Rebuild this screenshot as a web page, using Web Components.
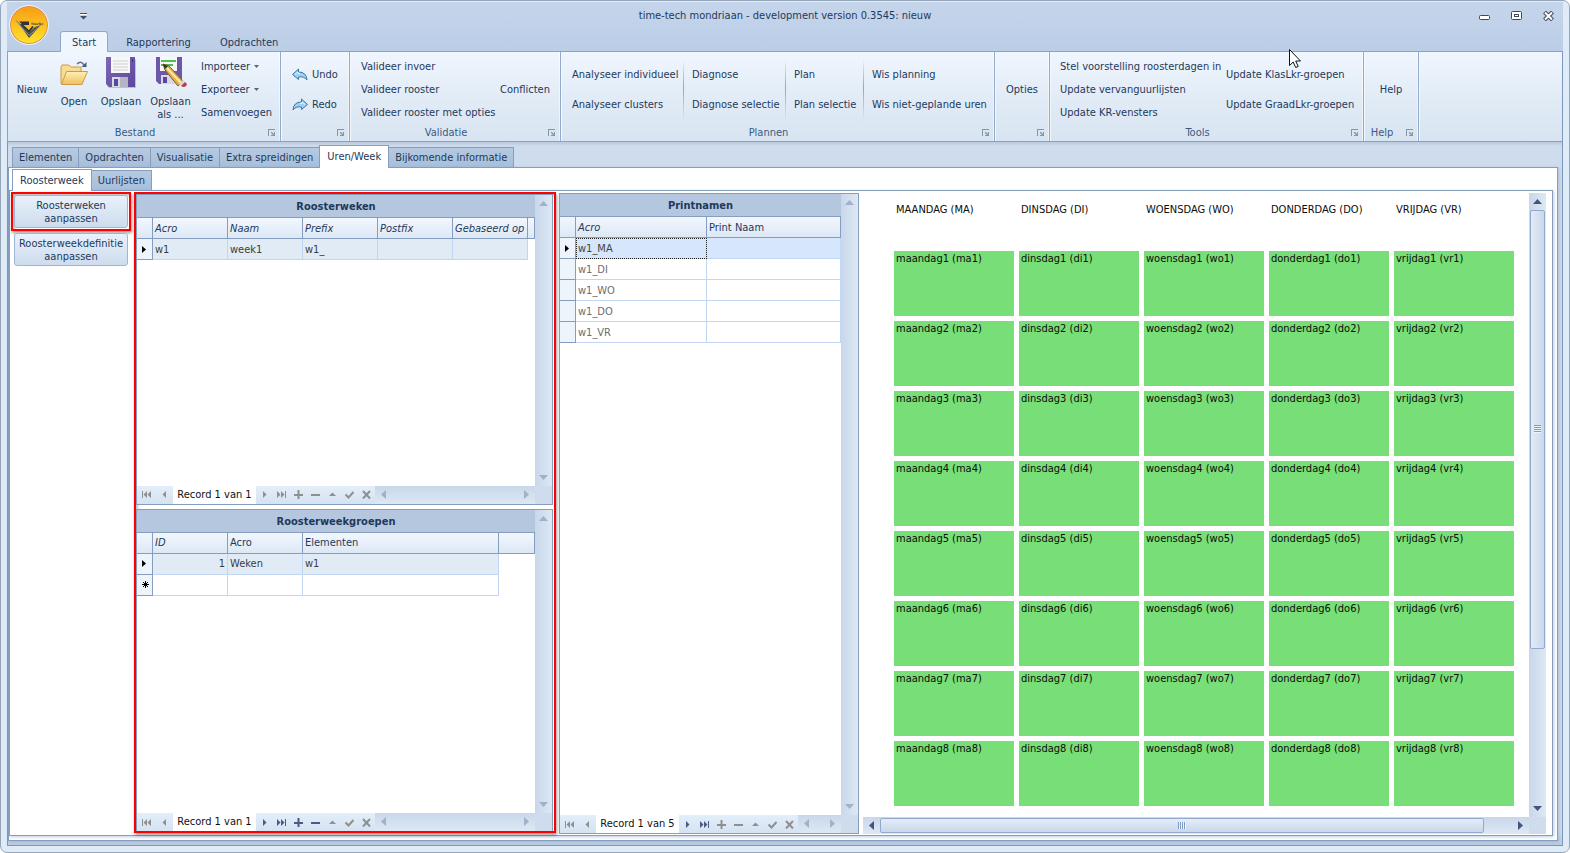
<!DOCTYPE html>
<html lang="nl">
<head>
<meta charset="utf-8">
<title>time-tech mondriaan</title>
<style>
  :root {
    --ink: #1e395b;
    --line: #859ebf;
    --cell-line: #c0d6f2;
    --frame: #dfebf7;
    --strip: #cfdced;
    --tab: linear-gradient(#b6cae1, #a7bfdb);
    --head: linear-gradient(#f2f7fe, #dde8f5);
    --mark: #ff0000;
  }
  body {
    margin: 0;
    background: #fff;
    color: var(--ink);
    font: 11px/13px "DejaVu Sans Condensed", "DejaVu Sans", Tahoma, sans-serif;
  }
</style>
</head>
<body>

<app-window>
  <title-bar slot="title" caption="time-tech mondriaan - development version 0.3545: nieuw"></title-bar>

  <ribbon-bar slot="ribbon">
    <ribbon-group caption="Bestand" style="--group: 273px">
      <ribbon-column style="--width: 40px; --indent: 4px" center><ribbon-button>Nieuw</ribbon-button></ribbon-column>
      <ribbon-button large icon="open" style="--width: 44px">Open</ribbon-button>
      <ribbon-button large icon="save" style="--width: 50px">Opslaan</ribbon-button>
      <ribbon-button large icon="saveas" style="--width: 49px">Opslaan als ...</ribbon-button>
      <ribbon-column style="--indent: 6px">
        <ribbon-button menu>Importeer</ribbon-button>
        <ribbon-button menu>Exporteer</ribbon-button>
        <ribbon-button>Samenvoegen</ribbon-button>
      </ribbon-column>
    </ribbon-group>
    <ribbon-group style="--group: 69px">
      <ribbon-column two style="--indent: 11px">
        <ribbon-button icon="undo">Undo</ribbon-button>
        <ribbon-button icon="redo">Redo</ribbon-button>
      </ribbon-column>
    </ribbon-group>
    <ribbon-group caption="Validatie" style="--group: 211px">
      <ribbon-column style="--width: 139px; --indent: 11px">
        <ribbon-button>Valideer invoer</ribbon-button>
        <ribbon-button>Valideer rooster</ribbon-button>
        <ribbon-button>Valideer rooster met opties</ribbon-button>
      </ribbon-column>
      <ribbon-column><ribbon-button>Conflicten</ribbon-button></ribbon-column>
    </ribbon-group>
    <ribbon-group caption="Plannen" style="--group: 434px">
      <ribbon-column two style="--width: 111px; --indent: 11px">
        <ribbon-button>Analyseer individueel</ribbon-button>
        <ribbon-button>Analyseer clusters</ribbon-button>
      </ribbon-column>
      <ribbon-column two rule style="--width: 94px; --indent: 8px">
        <ribbon-button>Diagnose</ribbon-button>
        <ribbon-button>Diagnose selectie</ribbon-button>
      </ribbon-column>
      <ribbon-column two rule style="--width: 70px; --indent: 8px">
        <ribbon-button>Plan</ribbon-button>
        <ribbon-button>Plan selectie</ribbon-button>
      </ribbon-column>
      <ribbon-column two rule style="--indent: 8px">
        <ribbon-button>Wis planning</ribbon-button>
        <ribbon-button>Wis niet-geplande uren</ribbon-button>
      </ribbon-column>
    </ribbon-group>
    <ribbon-group style="--group: 55px" middle>
      <ribbon-column><ribbon-button>Opties</ribbon-button></ribbon-column>
    </ribbon-group>
    <ribbon-group caption="Tools" style="--group: 314px">
      <ribbon-column style="--width: 166px; --indent: 10px">
        <ribbon-button>Stel voorstelling roosterdagen in</ribbon-button>
        <ribbon-button>Update vervanguurlijsten</ribbon-button>
        <ribbon-button>Update KR-vensters</ribbon-button>
      </ribbon-column>
      <ribbon-column two>
        <ribbon-button>Update KlasLkr-groepen</ribbon-button>
        <ribbon-button>Update GraadLkr-groepen</ribbon-button>
      </ribbon-column>
    </ribbon-group>
    <ribbon-group caption="Help" style="--group: 55px" middle>
      <ribbon-column><ribbon-button>Help</ribbon-button></ribbon-column>
    </ribbon-group>
  </ribbon-bar>

  <tab-page tabs="Elementen,Opdrachten,Visualisatie,Extra spreidingen,Uren/Week,Bijkomende informatie" active="4">
    <tab-page inner tabs="Roosterweek,Uurlijsten" active="0">
      <roster-view></roster-view>
    </tab-page>
  </tab-page>
</app-window>

<script>
const ICONS = {
  open: `<svg width="30" height="32" viewBox="0 0 30 32">
    <defs><linearGradient id="f" x2="0" y2="1"><stop stop-color="#fff0b8"/><stop offset="1" stop-color="#eebf5b"/></linearGradient></defs>
    <path d="M2 27V10l1-2h7l2 2h10v4" fill="#f6dc94" stroke="#cd9b45"/>
    <path d="M2.500 27.500L7.500 14.500H28.500L23 27.500Z" fill="url(#f)" stroke="#cd9b45" stroke-linejoin="round"/>
    <path d="M18 7q4-4 7 1" fill="none" stroke="#5b7594" stroke-width="1.500"/><path d="M27.500 5v5h-5z" fill="#45607f"/></svg>`,
  save: `<svg width="32" height="32" viewBox="0 0 32 32">
    <defs><linearGradient id="s" x2="1" y2="1"><stop stop-color="#7b68b4"/><stop offset="1" stop-color="#5d479c"/></linearGradient></defs>
    <path d="M2 1h27.500l1.500 2v28H4l-2-2z" fill="#9fa3b5" opacity=".6"/>
    <path d="M1 0h29v30H4l-3-3z" fill="url(#s)"/>
    <path d="M6 0h19v16H6z" fill="#f7f7f7"/><path d="M8 4h15M8 7h15M8 10h15M8 13h15" stroke="#cfcfd4"/>
    <path d="M7 20h16v10H7z" fill="#d8d8e2"/><path d="M9 22h4v7H9z" fill="#58479a"/><path d="M15 20h8v10h-8z" fill="#b5b4c5"/>
    <path d="M27 2h1v3h-1z" fill="#3f2f74"/></svg>`,
  saveas: `<svg width="32" height="32" viewBox="0 0 32 32">
    <path d="M1 0h26v27H4l-3-3z" fill="#6d58a8"/><path d="M5 0h17v14H5z" fill="#f7f7f7"/>
    <path d="M6 4h15M6 8h12" stroke="#4fc04f" stroke-width="2"/><path d="M6 18h15v9H6z" fill="#d8d8e2"/><path d="M8 20h4v6H8z" fill="#58479a"/>
    <path d="M8 7l6 2 14 15-5 5L10 13z" fill="#e3b04b" stroke="#7c5a2a"/><path d="M12 11l14 15" stroke="#fce9a8" stroke-width="2"/>
    <path d="M8 7l5 2-3 3z" fill="#333"/><path d="M24 27l4-4 2 2-4 4z" fill="#d4d9de"/><path d="M26 29l4-4q3 2 1 4t-5 0z" fill="#c23b44"/></svg>`,
  undo: `<svg width="16" height="14" viewBox="0 0 16 14"><path d="M.5 6.500L6.500 1v3q8 0 8.500 8-3-4-8.500-3v2.500z" fill="#9fd0ee" stroke="#3f76a8" stroke-linejoin="round"/><path d="M3 6.500l3-2.500v1.500h2" fill="none" stroke="#e6f6ff"/></svg>`,
  redo: `<svg width="16" height="14" viewBox="0 0 16 14"><path d="M15.500 6.500L9.500 1v3q-8 0-8.500 8 3-4 8.500-3v2.500z" fill="#9fd0ee" stroke="#3f76a8" stroke-linejoin="round"/><path d="M13 6.500l-3-2.500v1.500h-2" fill="none" stroke="#e6f6ff"/></svg>`,
};

// glyphs of the record navigator, all on an 11x9 canvas
const NAV = {
  first: `<path d="M1 1h1v7h-1zM6 1v7L2.500 4.500zM10 1v7L6.500 4.500z"/>`,
  prev: `<path d="M7 1v7L3.500 4.500z"/>`,
  next: `<path d="M4 1v7L7.500 4.500z"/>`,
  last: `<path d="M9 1h1v7h-1zM1 1v7L4.500 4.500zM5 1v7L8.500 4.500z"/>`,
  add: `<path d="M1 4h3.500V0h2v4H10v2H6.500v3h-2V6H1z"/>`,
  remove: `<path d="M1 4h9v2H1z"/>`,
  edit: `<path d="M2 6h7L5.500 2.500z"/>`,
  post: `<path d="M1.500 4.500L4.500 7.500L9.500 2" fill="none" stroke="currentColor" stroke-width="2"/>`,
  cancel: `<path d="M2 1L9 8.500M9 1L2 8.500" fill="none" stroke="currentColor" stroke-width="2"/>`,
};

const GRIDS = {
  roosterweken: {
    caption: "Roosterweken",
    columns: [["Acro", 75, 1], ["Naam", 75, 1], ["Prefix", 75, 1], ["Postfix", 75, 1], ["Gebaseerd op", 75, 1], ["", 7]],
    rows: [["w1", "week1", "w1_", "", ""]],
    record: "Record 1 van 1",
    enabled: [],
  },
  groepen: {
    caption: "Roosterweekgroepen",
    columns: [["ID", 75, 1], ["Acro", 75], ["Elementen", 196], ["", 36]],
    rows: [["1", "Weken", "w1"]],
    newRow: true,
    record: "Record 1 van 1",
    enabled: ["next", "last", "add", "remove"],
  },
  printnamen: {
    caption: "Printnamen",
    columns: [["Acro", 131, 1], ["Print Naam", 134]],
    rows: [["w1_MA", ""], ["w1_DI", ""], ["w1_WO", ""], ["w1_DO", ""], ["w1_VR", ""]],
    record: "Record 1 van 5",
    enabled: ["next", "last"],
  },
};

const DAYS = [["maandag", "ma"], ["dinsdag", "di"], ["woensdag", "wo"], ["donderdag", "do"], ["vrijdag", "vr"]];
const HOURS = 8;

class BaseElement extends HTMLElement {
  connectedCallback() {
    if (this.shadowRoot) return;
    this.attachShadow({ mode: "open" });
    this.shadowRoot.innerHTML = `
    <style>
    :host { box-sizing: border-box; }
    *, *::before, *::after { box-sizing: border-box; }
    button { font: inherit; color: inherit; background: none; border: none; padding: 0; margin: 0; cursor: default; }
    svg { display: block; flex: none; }
    </style>` + this.render();
  }
}

class AppWindow extends BaseElement {
  render() {
    return `
    <style>
    :host {
      display: flex;
      flex-direction: column;
      min-height: 100vh;
      padding: 1px 6px 6px;
      background: var(--frame);
      border: 1px solid #96a5b8;
      border-radius: 7px;
    }
    main {
      flex: 1;
      display: flex;
      flex-direction: column;
      padding: 3px 4px 4px 0;
      background: linear-gradient(#b9c8dd, var(--strip) 4px, var(--strip) 98%, #bccbe0);
      border: 1px solid #7d97ba;
      border-top: none;
    }
    .pointer { position: absolute; left: 1289px; top: 49px; }
    </style>
    <slot name="title"></slot>
    <slot name="ribbon"></slot>
    <main><slot></slot></main>
    <svg class="pointer" width="12" height="19" viewBox="0 0 12 19">
      <path d="M.5.500V16.500L4.200 13L6.700 18.500L9.200 17.400L6.700 12H11.500Z" fill="#fff" stroke="#111"/>
    </svg>`;
  }
}

class TitleBar extends BaseElement {
  render() {
    return `
    <style>
    :host {
      display: grid;
      grid-template: 29px 20px / 53px 1fr auto;
      background: linear-gradient(#c4d5eb, #bccee7);
    }
    .logo { grid-area: 1 / 1 / 3 / 2; place-self: start; margin: 3px 0 0 2px; }
    .title { grid-area: 1 / 1 / 2 / 4; text-align: center; line-height: 27px; }
    .quick { grid-area: 1 / 2 / 2 / 3; justify-self: start; margin-left: 20px; }
    .controls { grid-area: 1 / 3 / 2 / 4; display: flex; align-items: center; gap: 8px; padding: 0 3px 2px 0; }
    .controls button { width: 24px; display: flex; justify-content: center; }
    nav { grid-area: 2 / 2 / 3 / 4; display: flex; }
    nav a {
      color: inherit;
      text-decoration: none;
      padding: 4px 13px 0;
      margin-right: 1px;
      height: 21px;
      border: 1px solid transparent;
      border-bottom: none;
    }
    nav a[aria-current] {
      padding: 4px 11px 0;
      margin-right: 4px;
      background: #f0f6fe;
      border-color: #8ea9cc;
      border-radius: 3px 3px 0 0;
      z-index: 1;
    }
    </style>
    <svg class="logo" width="40" height="40" viewBox="0 0 40 40">
      <defs><linearGradient id="g" x2="0" y2="1"><stop stop-color="#f99b14"/><stop offset="1" stop-color="#ffe52c"/></linearGradient></defs>
      <circle cx="20" cy="20" r="18.500" fill="url(#g)" stroke="#e58a3c"/>
      <circle cx="20" cy="20" r="19.500" fill="none" stroke="#eef2f7"/>
      <path d="M10 16.500H20V20H14Z" fill="#2f3337"/>
      <path d="M6 13L10 18L20 27.500L26 22L32 20L20 33Z" fill="#4b4f53"/>
      <path d="M6.500 15.500L20 30.500L31 21" fill="none" stroke="#94989b"/>
      <path d="M12 19L20 26.500L24 21.500" fill="none" stroke="#33373b" stroke-width="2"/>
      <text x="22" y="20" font-size="3" font-weight="bold" fill="#33373b">TimeTec</text>
    </svg>
    <div class="title">${this.getAttribute("caption")}</div>
    <button class="quick" aria-label="Werkbalk aanpassen">
      <svg width="7" height="7" viewBox="0 0 7 7"><path d="M0 0h7v1H0zM0 3h7L3.500 6.500z" fill="#3d5170"/><path d="M0 1h7v1H0z" fill="#fff"/></svg>
    </button>
    <div class="controls">
      <button aria-label="Minimaliseren"><svg width="11" height="11"><rect x=".5" y="5.500" width="10" height="4" rx="1" fill="#fff" stroke="#40485c"/></svg></button>
      <button aria-label="Maximaliseren"><svg width="11" height="10"><rect x=".5" y=".5" width="10" height="8" rx="1" fill="#fff" stroke="#40485c"/><rect x="3.500" y="3.500" width="4" height="2" fill="#fff" stroke="#40485c"/></svg></button>
      <button aria-label="Sluiten"><svg width="11" height="10"><path d="M1.500 1L9.500 9M9.500 1L1.500 9" stroke="#40485c" stroke-width="4"/><path d="M2 1.500L9 8.500M9 1.500L2 8.500" stroke="#fff" stroke-width="2"/></svg></button>
    </div>
    <nav><a href="#" aria-current="page">Start</a><a href="#">Rapportering</a><a href="#">Opdrachten</a></nav>`;
  }
}

class RibbonBar extends BaseElement {
  render() {
    return `
    <style>
    :host {
      display: flex;
      height: 91px;
      background: linear-gradient(#f0f6fe, #e2ecf7 50%, #d8e4f1);
      border: 1px solid #8ba3c3;
      border-right-color: #7d97ba;
      padding: 0;
    }
    </style>
    <slot></slot>`;
  }
}

class RibbonGroup extends BaseElement {
  render() {
    return `
    <style>
    :host {
      flex: none;
      width: var(--group);
      display: flex;
      flex-direction: column;
      border-right: 1px solid #93abcb;
      box-shadow: inset -1px 0 #fff8, 1px 0 #f4f8fd;
    }
    .items { flex: 1; display: flex; }
    :host([middle]) .items { justify-content: center; }
    footer { display: flex; align-items: center; height: 17px; color: #3b5a82; }
    footer span { flex: 1; text-align: center; }
    footer button { width: 18px; padding-left: 6px; }
    </style>
    <div class="items"><slot></slot></div>
    <footer>
      <span>${this.getAttribute("caption") || ""}</span>
      <button aria-label="Meer opties"><svg width="8" height="8" viewBox="0 0 8 8"><path d="M0 7V0h7v1H1v6z" fill="#8795a8"/><path d="M3 3h1l2 2V3h1v4H3V6h2L3 4z" fill="#8795a8"/></svg></button>
    </footer>`;
  }
}

class RibbonColumn extends BaseElement {
  render() {
    return `
    <style>
    :host {
      flex: none;
      display: flex;
      flex-direction: column;
      justify-content: center;
      box-sizing: content-box;
      width: var(--width, auto);
      padding: 3px 0 0 var(--indent, 0px);
      --row: 23px;
    }
    :host([center]) { align-items: center; }
    :host([two]) { --row: 30px; }
    :host([rule]) {
      border-left: 1px solid;
      border-image: linear-gradient(transparent 8px, #8fa6c6 50%, transparent calc(100% - 4px)) 1;
      margin-right: -1px;
    }
    </style>
    <slot></slot>`;
  }
}

class RibbonButton extends BaseElement {
  render() {
    const icon = ICONS[this.getAttribute("icon")] || "";
    const arrow = this.hasAttribute("menu")
      ? `<svg width="5" height="3" viewBox="0 0 5 3"><path d="M0 0h5L2.500 3z" fill="#56657c"/></svg>`
      : "";
    return `
    <style>
    :host { display: block; }
    button { display: flex; align-items: center; gap: 4px; height: var(--row); white-space: nowrap; }
    :host([large]) { flex: none; width: var(--width); }
    :host([large]) button {
      flex-direction: column;
      gap: 6px;
      width: 100%;
      height: auto;
      padding-top: 5px;
      white-space: normal;
    }
    </style>
    <button>${icon}<span><slot></slot></span>${arrow}</button>`;
  }
}

class TabPage extends BaseElement {
  render() {
    const active = Number(this.getAttribute("active"));
    const tabs = this.getAttribute("tabs").split(",").map((name, i) =>
      `<button role="tab" aria-selected="${i === active}">${name}</button>`);
    return `
    <style>
    :host { flex: 1; display: flex; flex-direction: column; }
    :host([inner]) { padding: 0 4px 4px 0; }
    [role="tablist"] { display: flex; align-items: flex-end; height: 22px; padding-left: 4px; }
    :host([inner]) [role="tablist"] { padding-left: 3px; }
    button {
      height: 20px;
      padding: 0 6px;
      background: var(--tab);
      border: 1px solid var(--line);
      border-bottom: none;
      margin-right: -1px;
    }
    button[aria-selected="true"] {
      height: 23px;
      padding: 0 7px 2px;
      margin-bottom: -1px;
      background: #fff;
      position: relative;
    }
    :host([inner]) button[aria-selected="true"] { height: 22px; padding: 0 7px; }
    .page {
      flex: 1;
      display: flex;
      flex-direction: column;
      background: #fff;
      border: 1px solid var(--line);
      box-shadow: 1px 1px 3px #8ba3c388;
    }
    :host([inner]) .page { padding: 2px 0 0; }
    </style>
    <div role="tablist">${tabs.join("")}</div>
    <div class="page"><slot></slot></div>`;
  }
}

class RosterView extends BaseElement {
  render() {
    return `
    <style>
    :host { flex: 1; display: flex; }
    .actions { flex: none; width: 124px; padding: 0 3px 0 1px; margin-top: -1px; display: flex; flex-direction: column; gap: 2px; }
    .actions button {
      display: block;
      width: 114px;
      min-height: 33px;
      padding: 2px 0;
      border: 1px solid #9fb6d3;
      border-radius: 3px;
      background: linear-gradient(#e9f1fa, #cddcee);
    }
    .actions > button { margin-left: 3px; }
    .stack { flex: 1; display: flex; flex-direction: column; gap: 4px; }
    .groups { margin: -1px 3px 2px 0; }
    .print { margin-bottom: 1px; }
    </style>
    <div class="actions">
      <mark-frame tight><button>Roosterweken<br>aanpassen</button></mark-frame>
      <button>Roosterweekdefinitie aanpassen</button>
    </div>
    <mark-frame class="groups">
      <div class="stack">
        <data-grid name="roosterweken" style="flex: 310"></data-grid>
        <data-grid name="groepen" style="flex: 323" flush></data-grid>
      </div>
    </mark-frame>
    <data-grid class="print" name="printnamen"></data-grid>
    <week-schedule></week-schedule>`;
  }
}

class MarkFrame extends BaseElement {
  render() {
    return `
    <style>
    :host {
      display: flex;
      flex: none;
      padding-right: 1px;
      border: 2px solid var(--mark);
      box-shadow: 1px 2px 3px #0006, inset 2px 2px 3px #0004;
    }
    :host([tight]) { padding: 1px; }
    </style>
    <slot></slot>`;
  }
}

class DataGrid extends BaseElement {
  render() {
    const grid = GRIDS[this.getAttribute("name")];
    const cols = grid.columns.map(([, width]) => `<col style="width: ${width}px">`).join("");
    const heads = grid.columns.map(([name, , italic]) => `<th class="${italic ? "italic" : ""}">${name}</th>`).join("");
    const filler = grid.columns.at(-1)[0] === "" ? `<td class="filler"></td>` : "";
    const rows = grid.rows.map((row, i) => `
      <tr class="${i === 0 ? "current" : ""}">
        <th class="mark">${i === 0 ? `<svg width="4" height="7"><path d="M0 0v7l4-3.500z"/></svg>` : ""}</th>
        ${row.map((text) => `<td class="${/^\d+$/.test(text) ? "number" : ""}">${text}</td>`).join("")}${filler}
      </tr>`).join("");
    const newRow = !grid.newRow ? "" : `
      <tr><th class="mark"><svg width="7" height="7" viewBox="0 0 7 7"><path d="M3.500 0v7M0 3.500h7M1 1l5 5M6 1l-5 5" stroke="#000"/></svg></th>
      ${"<td></td>".repeat(grid.columns.length - 1)}${filler}</tr>`;
    return `
    <style>
    :host { display: grid; flex: none; grid-template: 1fr 18px / auto 17px; border: 1px solid var(--line); background: #fff; }
    :host([flush]) { border-bottom: none; }
    table { table-layout: fixed; border-collapse: separate; border-spacing: 0; width: min-content; align-self: start; }
    caption {
      height: 23px;
      padding: 5px 0 4px;
      font-weight: bold;
      background: #b5c7df;
      border-bottom: 1px solid var(--line);
    }
    thead th {
      height: 21px;
      padding: 0 2px;
      font-weight: normal;
      text-align: left;
      white-space: nowrap;
      background: var(--head);
      border-right: 1px solid var(--line);
      border-bottom: 1px solid var(--line);
    }
    .italic { font-style: italic; }
    td {
      height: 21px;
      padding: 0 2px;
      color: #3c3c3c;
      border-right: 1px solid var(--cell-line);
      border-bottom: 1px solid var(--cell-line);
    }
    .mark { height: 21px; padding: 0 0 0 5px; background: #eef4fb; border-right: 1px solid var(--line); border-bottom: 1px solid var(--line); }
    .number { text-align: right; }
    .filler { border: none; }
    .current td:not(.filler) { background: #e1ebf6; }
    :host([name="printnamen"]) td { color: #6e6e6e; }
    :host([name="printnamen"]) .current td { background: #d5e6fd; color: #444; }
    :host([name="printnamen"]) .current td:nth-child(2) { outline: 1px dotted #222; outline-offset: -1px; }
    .corner { background: var(--strip); }
    </style>
    <table>
      <caption>${grid.caption}</caption>
      <colgroup><col style="width: 16px">${cols}</colgroup>
      <thead><tr><th></th>${heads}</tr></thead>
      <tbody>${rows}${newRow}</tbody>
    </table>
    <scroll-bar vertical disabled></scroll-bar>
    <record-nav text="${grid.record}" enabled="${grid.enabled.join(" ")}"></record-nav>
    <div class="corner"></div>`;
  }
}

class RecordNav extends BaseElement {
  render() {
    const enabled = this.getAttribute("enabled").split(" ");
    const button = (name) => `
      <button aria-label="${name}" ${enabled.includes(name) ? "" : "disabled"}>
        <svg width="11" height="9" viewBox="0 0 11 9" fill="currentColor">${NAV[name]}</svg>
      </button>`;
    return `
    <style>
    :host { display: flex; min-width: 0; background: linear-gradient(#e3eefa, #d5e2f1); }
    button { width: 17px; display: grid; place-items: center; color: #4b5b84; }
    button:disabled { color: #8f8f8f; }
    button:nth-of-type(-n+2) { width: 18px; }
    span { width: 83px; line-height: 18px; text-align: center; background: #fff; color: #101010; white-space: nowrap; }
    scroll-bar { flex: 1; }
    </style>
    ${button("first")}${button("prev")}
    <span>${this.getAttribute("text")}</span>
    ${["next", "last", "add", "remove", "edit", "post", "cancel"].map(button).join("")}
    <scroll-bar disabled></scroll-bar>`;
  }
}

class ScrollBar extends BaseElement {
  render() {
    const vertical = this.hasAttribute("vertical");
    const arrows = vertical
      ? ["M0 5h9L4.500 0z", "M0 0h9L4.500 5z"]
      : ["M5 0v9L0 4.500z", "M0 0v9l5-4.500z"];
    const size = vertical ? `width="9" height="5"` : `width="5" height="9"`;
    const [start, end] = arrows.map((d) => `<button tabindex="-1" aria-hidden="true"><svg ${size}><path d="${d}" fill="currentColor"/></svg></button>`);
    const track = this.hasAttribute("disabled")
      ? `<div class="rest" style="flex: 1"></div>`
      : `<div class="thumb"><i></i></div><div class="rest"></div>`;
    return `
    <style>
    :host { display: flex; background: linear-gradient(#c8d7ea, #dde8f4); color: #46527a; }
    :host([vertical]) { flex-direction: column; background: linear-gradient(90deg, #c8d7ea, #dde8f4); }
    :host([disabled]) { color: #a3b0c9; }
    button { width: 17px; height: 17px; display: grid; place-items: center; }
    .thumb {
      flex: var(--thumb);
      display: grid;
      place-items: center;
      margin: 1px 0;
      border: 1px solid #91abd0;
      border-radius: 2px;
      background: linear-gradient(#e3ecf7, #c9d8eb);
    }
    :host([vertical]) .thumb { margin: 0 1px; background: linear-gradient(90deg, #e3ecf7, #c9d8eb); }
    .rest { flex: var(--rest); }
    i { width: 8px; height: 7px; background: repeating-linear-gradient(90deg, #7f9bc4 0 1px, #eef4fb 1px 2px); }
    :host([vertical]) i { width: 7px; height: 8px; background: repeating-linear-gradient(#7f9bc4 0 1px, #eef4fb 1px 2px); }
    </style>
    ${start}${track}${end}`;
  }
}

class WeekSchedule extends BaseElement {
  render() {
    const heads = DAYS.map(([day, code]) => `<div class="day">${day.toUpperCase()} (${code.toUpperCase()})</div>`).join("");
    let slots = "";
    for (let hour = 1; hour <= HOURS; hour++) {
      slots += DAYS.map(([day, code]) => `<div class="slot">${day}${hour} (${code}${hour})</div>`).join("");
    }
    return `
    <style>
    :host { flex: 1; display: grid; grid-template: 1fr 17px / 1fr 17px; margin: 0 6px 1px 4px; color: #0c0c0c; }
    .week {
      display: grid;
      grid-template: 53px / repeat(5, minmax(120px, 1fr));
      grid-auto-rows: minmax(65px, 1fr);
      gap: 5px;
      padding: 0 15px 11px 31px;
    }
    .day { padding: 10px 2px; }
    .slot { padding: 1px 2px; background: #78de78; }
    .corner { background: var(--strip); }
    </style>
    <div class="week">${heads}${slots}</div>
    <scroll-bar vertical style="--thumb: 438; --rest: 152"></scroll-bar>
    <scroll-bar style="--thumb: 604; --rest: 28"></scroll-bar>
    <div class="corner"></div>`;
  }
}

customElements.define("app-window", AppWindow);
customElements.define("title-bar", TitleBar);
customElements.define("ribbon-bar", RibbonBar);
customElements.define("ribbon-group", RibbonGroup);
customElements.define("ribbon-column", RibbonColumn);
customElements.define("ribbon-button", RibbonButton);
customElements.define("tab-page", TabPage);
customElements.define("roster-view", RosterView);
customElements.define("mark-frame", MarkFrame);
customElements.define("data-grid", DataGrid);
customElements.define("record-nav", RecordNav);
customElements.define("scroll-bar", ScrollBar);
customElements.define("week-schedule", WeekSchedule);
</script>
</body>
</html>
